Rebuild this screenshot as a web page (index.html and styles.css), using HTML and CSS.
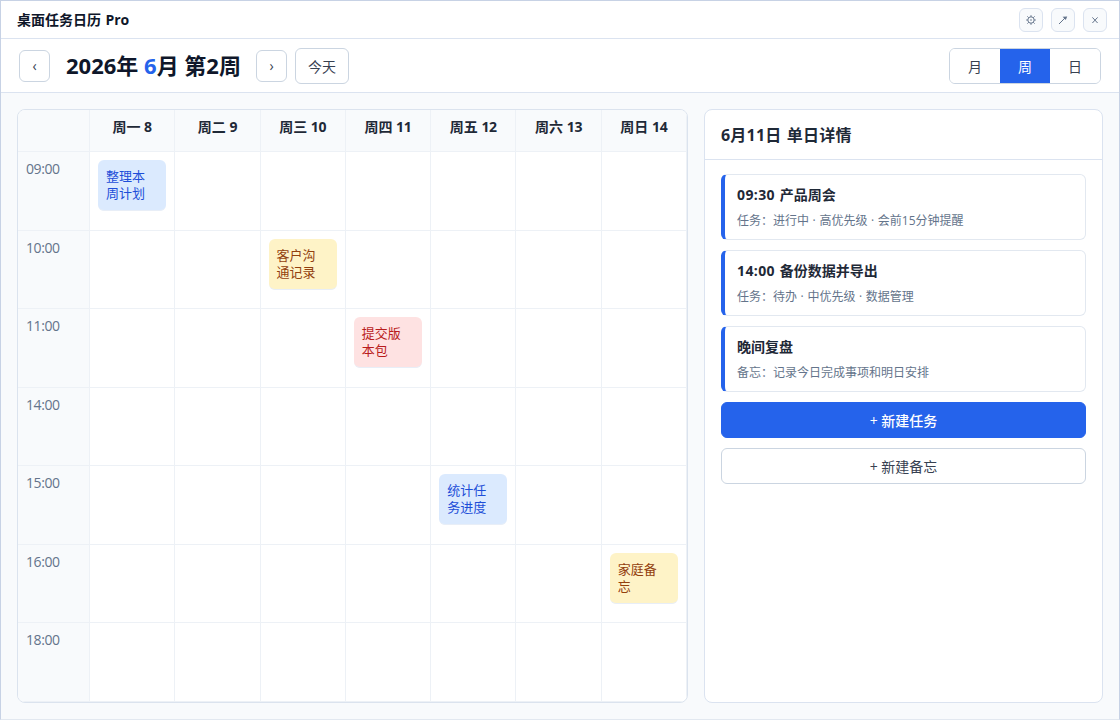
FILE: index.html
```html
<!DOCTYPE html>
<html lang="zh-CN">

<head>
    <meta charset="UTF-8">
    <title>桌面任务日历 Pro</title>
    <link rel="stylesheet" href="styles.css">
</head>

<body>
    <div class="window">
        <header class="titlebar">
            <div class="app-name">桌面任务日历 Pro</div>
            <div class="win-buttons">
                <button class="win-btn">
                    <svg width="10" height="10" viewBox="0 0 10 10"><circle cx="5" cy="5" r="3.2"/><circle class="dot" cx="5" cy="5" r=".8"/><path d="M5 .2v1.6M5 8.2v1.6M.2 5h1.6M8.2 5h1.6M1.4 1.4l1.2 1.2M7.4 7.4l1.2 1.2M8.6 1.4L7.4 2.6M2.6 7.4L1.4 8.6"/></svg>
                </button>
                <button class="win-btn">
                    <svg width="10" height="10" viewBox="0 0 10 10"><path d="M1 9L7 3"/><path class="dot" d="M9.2 1.6L7.8 5L4.6 1.8z"/></svg>
                </button>
                <button class="win-btn">
                    <svg width="10" height="10" viewBox="0 0 10 10"><path d="M2.4 2.4l5.2 5.6M7.6 2.4L2.4 8"/></svg>
                </button>
            </div>
        </header>

        <div class="toolbar">
            <button class="nav-btn">‹</button>
            <h1 class="month">2026年 <span class="accent">6</span>月 第2周</h1>
            <button class="nav-btn">›</button>
            <button class="today">今天</button>
            <div class="views">
                <button>月</button>
                <button class="active">周</button>
                <button>日</button>
            </div>
        </div>

        <main class="content">
            <section class="calendar">
                <div class="head time"></div>
                <div class="head">周一 <span class="en">8</span></div>
                <div class="head">周二 <span class="en">9</span></div>
                <div class="head">周三 <span class="en">10</span></div>
                <div class="head">周四 <span class="en">11</span></div>
                <div class="head">周五 <span class="en">12</span></div>
                <div class="head">周六 <span class="en">13</span></div>
                <div class="head">周日 <span class="en">14</span></div>

                <div class="time">09:00</div>
                <div class="cell"><div class="event blue">整理本周计划</div></div>
                <div class="cell"></div>
                <div class="cell"></div>
                <div class="cell"></div>
                <div class="cell"></div>
                <div class="cell"></div>
                <div class="cell"></div>

                <div class="time">10:00</div>
                <div class="cell"></div>
                <div class="cell"></div>
                <div class="cell"><div class="event yellow">客户沟通记录</div></div>
                <div class="cell"></div>
                <div class="cell"></div>
                <div class="cell"></div>
                <div class="cell"></div>

                <div class="time">11:00</div>
                <div class="cell"></div>
                <div class="cell"></div>
                <div class="cell"></div>
                <div class="cell"><div class="event red">提交版本包</div></div>
                <div class="cell"></div>
                <div class="cell"></div>
                <div class="cell"></div>

                <div class="time">14:00</div>
                <div class="cell"></div>
                <div class="cell"></div>
                <div class="cell"></div>
                <div class="cell"></div>
                <div class="cell"></div>
                <div class="cell"></div>
                <div class="cell"></div>

                <div class="time">15:00</div>
                <div class="cell"></div>
                <div class="cell"></div>
                <div class="cell"></div>
                <div class="cell"></div>
                <div class="cell"><div class="event blue">统计任务进度</div></div>
                <div class="cell"></div>
                <div class="cell"></div>

                <div class="time">16:00</div>
                <div class="cell"></div>
                <div class="cell"></div>
                <div class="cell"></div>
                <div class="cell"></div>
                <div class="cell"></div>
                <div class="cell"></div>
                <div class="cell"><div class="event yellow">家庭备忘</div></div>

                <div class="time">18:00</div>
                <div class="cell"></div>
                <div class="cell"></div>
                <div class="cell"></div>
                <div class="cell"></div>
                <div class="cell"></div>
                <div class="cell"></div>
                <div class="cell"></div>
            </section>

            <aside class="panel">
                <h2 class="panel-title">6月11日 单日详情</h2>
                <div class="panel-body">
                    <div class="task">
                        <div class="task-name"><span class="clock">09:30</span> 产品周会</div>
                        <div class="task-info">任务：进行中 · 高优先级 · 会前15分钟提醒</div>
                    </div>
                    <div class="task">
                        <div class="task-name"><span class="clock">14:00</span> 备份数据并导出</div>
                        <div class="task-info">任务：待办 · 中优先级 · 数据管理</div>
                    </div>
                    <div class="task">
                        <div class="task-name">晚间复盘</div>
                        <div class="task-info">备忘：记录今日完成事项和明日安排</div>
                    </div>
                    <button class="btn primary">+ 新建任务</button>
                    <button class="btn">+ 新建备忘</button>
                </div>
            </aside>
        </main>
    </div>
</body>

</html>
```

FILE: styles.css
```css
* {
  box-sizing: border-box;
}

html, body {
  margin: 0;
  padding: 0;
}

body {
  font-family: "Open Sans", "Noto Sans CJK SC", sans-serif;
  font-size: 14px;
  color: #1f2937;
}

button {
  font-family: inherit;
  font-size: 14px;
  color: #374151;
  padding: 0;
  background-color: #fff;
  border: 1px solid #cbd5e1;
  border-radius: 6px;
}

/* day numbers are set a little tighter */
.en {
  letter-spacing: -0.02em;
}

.window {
  display: flex;
  flex-direction: column;
  height: 720px;
  background-color: #f8fafc;
  border: 1px solid #c7d2e5;
  border-bottom-color: #e2e8f0;
}

/* Title bar */
.titlebar {
  display: flex;
  align-items: center;
  justify-content: space-between;
  height: 38px;
  padding: 0 12px 0 16px;
  background-color: #fff;
  border-bottom: 1px solid #dbe3f0;
}

.app-name {
  padding-bottom: 2px;
  font-weight: 700;
  word-spacing: 0.8px;
  color: #0f172a;
}

.win-buttons {
  display: flex;
  gap: 8px;
}

.win-btn {
  display: flex;
  align-items: center;
  justify-content: center;
  width: 24px;
  height: 24px;
  background-color: #f8fafc;
  border-color: #dbe3f0;
}

.win-btn svg {
  fill: none;
  stroke: #64748b;
  stroke-width: 1;
}

.win-btn .dot {
  fill: #64748b;
  stroke: none;
}

/* Toolbar */
.toolbar {
  display: flex;
  align-items: center;
  height: 54px;
  padding: 0 18px;
  background-color: #fff;
  border-bottom: 1px solid #dbe3f0;
}

.nav-btn {
  width: 31px;
  height: 32px;
}

.month {
  width: 174px;
  margin: 0 16px;
  padding-bottom: 2px;
  font-size: 22px;
  line-height: 30px;
  white-space: nowrap;
  color: #0f172a;
}

.month .accent {
  color: #2563eb;
}

.today {
  width: 54px;
  height: 36px;
  margin-left: 8px;
}

.views {
  display: flex;
  width: 152px;
  height: 36px;
  margin-left: auto;
  border: 1px solid #cbd5e1;
  border-radius: 6px;
  overflow: hidden;
}

.views button {
  flex: 1;
  border: none;
  border-radius: 0;
}

.views .active {
  color: #fff;
  background-color: #2563eb;
}

/* Content */
.content {
  display: grid;
  grid-template-columns: 671px 1fr;
  gap: 16px;
  flex: 1;
  min-height: 0;
  padding: 16px;
}

.calendar {
  display: grid;
  grid-template-columns: 72px repeat(7, 1fr);
  grid-template-rows: 42px repeat(7, 1fr);
  background-color: #fff;
  border: 1px solid #dbe3ee;
  border-radius: 8px;
  overflow: hidden;
}

.head, .time, .cell {
  min-width: 0;
  min-height: 0;
  padding: 8px;
  border-right: 1px solid #edf1f6;
  border-bottom: 1px solid #edf1f6;
}

.head {
  line-height: 18px;
  text-align: center;
  font-weight: 700;
  background-color: #f8fafc;
}

.time {
  line-height: 18px;
  letter-spacing: -0.4px;
  color: #64748b;
  background-color: #f8fafc;
}

.event {
  height: 51px;
  padding: 8px 12px 8px 8px;
  font-size: 13px;
  line-height: 17px;
  border: 0 solid #e8eef7;
  border-bottom-width: 1px;
  border-radius: 6px;
}

.blue {
  color: #1d4ed8;
  background-color: #dbeafe;
}

.yellow {
  color: #92400e;
  background-color: #fef3c7;
}

.red {
  color: #b91c1c;
  background-color: #fee2e2;
}

/* Day details */
.panel {
  background-color: #fff;
  border: 1px solid #dbe3f0;
  border-radius: 8px;
}

.panel-title {
  height: 50px;
  margin: 0;
  padding: 0 16px;
  font-size: 16px;
  line-height: 50px;
  letter-spacing: 0.2px;
  word-spacing: 1px;
  border-bottom: 1px solid #dbe3f0;
}

.panel-body {
  display: flex;
  flex-direction: column;
  gap: 10px;
  padding: 14px 16px;
}

.task {
  height: 66px;
  padding: 10px 12px;
  border: 1px solid #e2e8f0;
  border-left: 4px solid #2563eb;
  border-radius: 6px;
}

.task-name {
  line-height: 20px;
  font-weight: 700;
}

.task-name .clock {
  letter-spacing: 0.4px;
  margin-right: 1px;
}

.task-info {
  margin-top: 7px;
  font-size: 12px;
  line-height: 17px;
  word-spacing: 0.5px;
  color: #64748b;
}

.btn {
  height: 36px;
}

.primary {
  font-weight: 500;
  color: #fff;
  background-color: #2563eb;
  border-color: #2563eb;
}
```
